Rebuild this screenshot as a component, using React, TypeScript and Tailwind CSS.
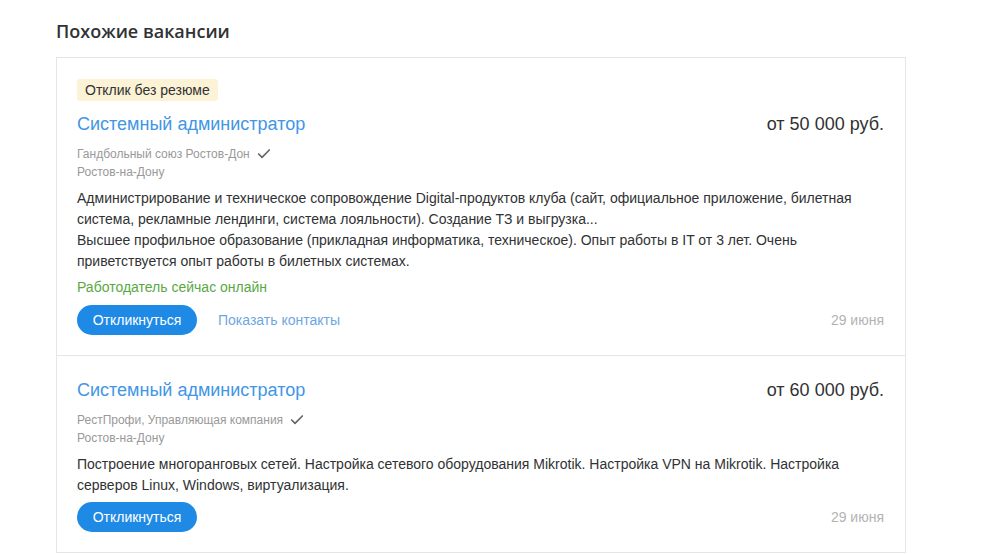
import { Check } from 'lucide-react';

type Vacancy = {
  id: number;
  noResume?: boolean;
  title: string;
  salary: string;
  company: string;
  city: string;
  description: string[];
  online?: boolean;
  showContacts?: boolean;
  date: string;
};

const vacancies: Vacancy[] = [
  {
    id: 1,
    noResume: true,
    title: 'Системный администратор',
    salary: 'от 50 000 руб.',
    company: 'Гандбольный союз Ростов-Дон',
    city: 'Ростов-на-Дону',
    description: [
      'Администрирование и техническое сопровождение Digital-продуктов клуба (сайт, официальное приложение, билетная система, рекламные лендинги, система лояльности). Создание ТЗ и выгрузка...',
      'Высшее профильное образование (прикладная информатика, техническое). Опыт работы в IT от 3 лет. Очень приветствуется опыт работы в билетных системах.',
    ],
    online: true,
    showContacts: true,
    date: '29 июня',
  },
  {
    id: 2,
    title: 'Системный администратор',
    salary: 'от 60 000 руб.',
    company: 'РестПрофи, Управляющая компания',
    city: 'Ростов-на-Дону',
    description: [
      'Построение многоранговых сетей. Настройка сетевого оборудования Mikrotik. Настройка VPN на Mikrotik. Настройка серверов Linux, Windows, виртуализация.',
    ],
    date: '29 июня',
  },
];

function VacancyItem({ v, last }: { v: Vacancy; last: boolean }) {
  return (
    <div
      className={`pl-[20px] pr-[21px] pb-[20px] ${v.noResume ? 'pt-[20px]' : 'pt-[22px]'} ${
        last ? '' : 'border-b border-[#e6e6e6]'
      }`}
    >
      {v.noResume && (
        <div className="mb-[10px]">
          <span className="inline-block h-[22px] rounded-[3px] bg-[#fcf2d6] px-[8px] text-[14px] leading-[22px] text-[#303233]">
            Отклик без резюме
          </span>
        </div>
      )}
      <div className="flex items-start justify-between">
        <a className="text-[18px] leading-[24px] text-[#4196e6] cursor-pointer">{v.title}</a>
        <span className="text-[18px] leading-[24px] text-[#303233]">{v.salary}</span>
      </div>
      <div className="mt-[9px] flex items-center gap-[6px] text-[12px] leading-[18px] text-[#999]">
        {v.company}
        <Check className="h-[16px] w-[16px] text-[#666]" strokeWidth={2.5} />
      </div>
      <div className="text-[12px] leading-[18px] text-[#999]">{v.city}</div>
      <div className="mt-[7px] text-[14px] leading-[21px] text-[#303233]">
        {v.description.map((d, i) => (
          <p key={i}>{d}</p>
        ))}
      </div>
      {v.online && (
        <div className="mt-[5px] text-[14px] leading-[21px] text-[#5aa844]">Работодатель сейчас онлайн</div>
      )}
      <div className={`flex items-center justify-between ${v.online ? 'mt-[7px]' : 'mt-[6px]'}`}>
        <div className="flex items-center gap-[21px]">
          <button className="h-[30px] w-[120px] rounded-full bg-[#1e8ae6] text-[14px] text-white">
            Откликнуться
          </button>
          {v.showContacts && (
            <a className="text-[14px] text-[#6da7df] cursor-pointer">Показать контакты</a>
          )}
        </div>
        <span className="text-[14px] text-[#b3b3b3]">{v.date}</span>
      </div>
    </div>
  );
}

export default function App() {
  return (
    <div className="min-h-screen bg-white font-['Liberation_Sans',Arial,sans-serif]">
      <div className="w-[850px] pl-[56px] pt-[18px] box-content">
        <h2 className="font-['Open_Sans',sans-serif] text-[18px] font-semibold leading-[26px] text-[#303233]">
          Похожие вакансии
        </h2>
        <div className="mt-[13px] border border-[#e6e6e6]">
          {vacancies.map((v, i) => (
            <VacancyItem key={v.id} v={v} last={i === vacancies.length - 1} />
          ))}
        </div>
      </div>
    </div>
  );
}
